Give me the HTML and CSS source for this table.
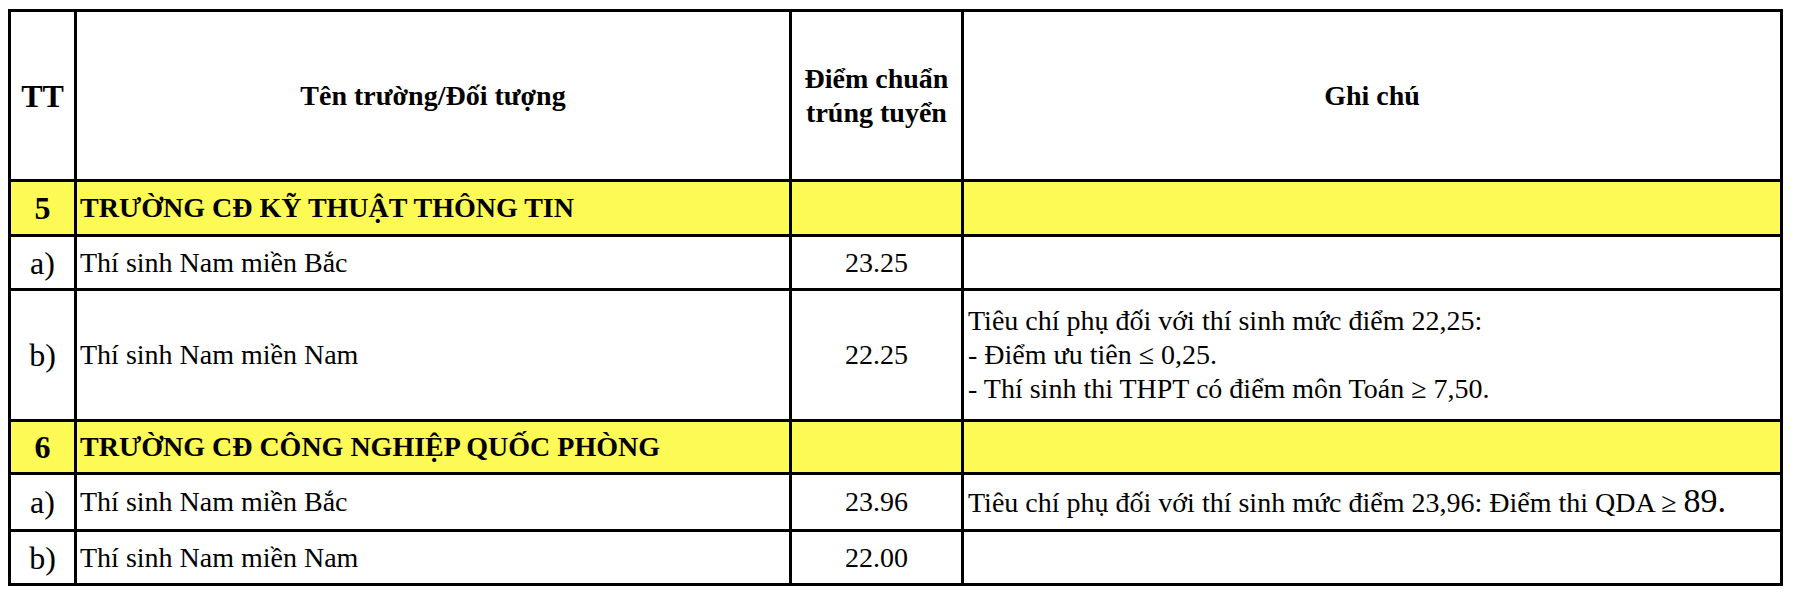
FILE: index.html
```html
<!DOCTYPE html>
<html lang="vi">
<head>
<meta charset="utf-8">
<title>Điểm chuẩn</title>
<link rel="stylesheet" href="styles.css">
</head>
<body>
<div class="grid">
  <div class="cell tt head big">TT</div>
  <div class="cell center head">Tên trường/Đối tượng</div>
  <div class="cell center head">Điểm chuẩn<br>trúng tuyển</div>
  <div class="cell center head">Ghi chú</div>

  <div class="cell tt hl bold">5</div>
  <div class="cell name hl bold">TRƯỜNG CĐ KỸ THUẬT THÔNG TIN</div>
  <div class="cell hl"></div>
  <div class="cell hl"></div>

  <div class="cell tt">a)</div>
  <div class="cell name">Thí sinh Nam miền Bắc</div>
  <div class="cell center">23.25</div>
  <div class="cell note"></div>

  <div class="cell tt">b)</div>
  <div class="cell name">Thí sinh Nam miền Nam</div>
  <div class="cell center">22.25</div>
  <div class="cell note">Tiêu chí phụ đối với thí sinh mức điểm 22,25:<br>- Điểm ưu tiên ≤ 0,25.<br>- Thí sinh thi THPT có điểm môn Toán ≥ 7,50.</div>

  <div class="cell tt hl bold">6</div>
  <div class="cell name hl bold">TRƯỜNG CĐ CÔNG NGHIỆP QUỐC PHÒNG</div>
  <div class="cell hl"></div>
  <div class="cell hl"></div>

  <div class="cell tt">a)</div>
  <div class="cell name">Thí sinh Nam miền Bắc</div>
  <div class="cell center">23.96</div>
  <div class="cell note"><span>Tiêu chí phụ đối với thí sinh mức điểm 23,96: Điểm thi QDA ≥ <span class="large">89.</span></span></div>

  <div class="cell tt">b)</div>
  <div class="cell name">Thí sinh Nam miền Nam</div>
  <div class="cell center">22.00</div>
  <div class="cell note"></div>
</div>
</body>
</html>
```

FILE: styles.css
```css
html, body {
  margin: 0;
  background: #ffffff;
}
body {
  padding: 9px 8px;
  font-family: "Liberation Serif", "Times New Roman", serif;
  color: #000000;
}
.grid {
  display: grid;
  width: 1775px;
  box-sizing: border-box;
  grid-template-columns: 63px 712px 169px 816px;
  grid-template-rows: 167px 52px 51px 128px 50px 54px 51px;
  gap: 3px;
  padding: 3px;
  background: #000000;
}
.cell {
  background: #ffffff;
  display: flex;
  align-items: center;
  font-size: 28px;
  line-height: 34px;
}
.tt {
  justify-content: center;
  font-size: 32px;
}
.center {
  justify-content: center;
  text-align: center;
}
.name {
  padding-left: 3px;
}
.note {
  padding-left: 4px;
}
.head {
  font-weight: bold;
}
.big {
  font-size: 32px;
}
.bold {
  font-weight: bold;
}
.hl {
  background: #fefa55;
}
.large {
  font-size: 34px;
}
```
